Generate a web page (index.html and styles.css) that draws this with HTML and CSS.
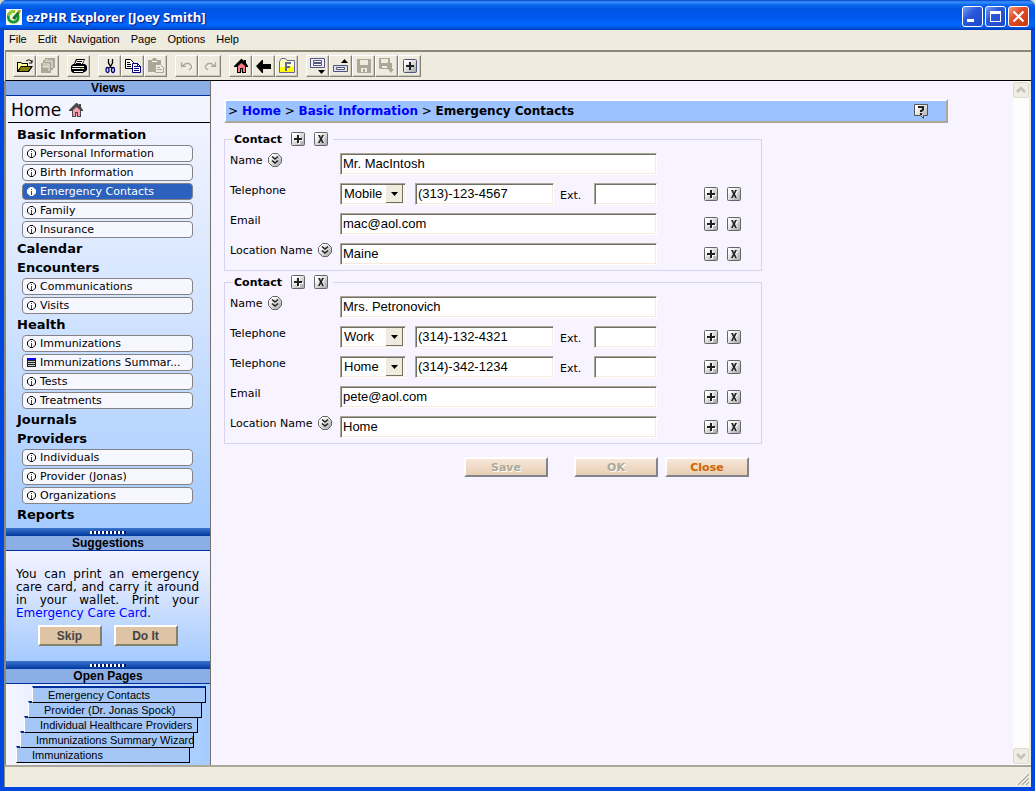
FILE: index.html
```html
<!DOCTYPE html>
<html lang="en">
<head>
    <meta charset="UTF-8">
    <meta name="viewport" content="width=device-width, initial-scale=1.0">
    <title>ezPHR Explorer [Joey Smith]</title>
    <link rel="stylesheet" href="styles.css">
</head>
<body>
<!-- shared icons -->
<svg class="defs" width="0" height="0" aria-hidden="true">
    <defs>
        <linearGradient id="metal" x1="0" y1="0" x2="1" y2="1">
            <stop offset="0.2" stop-color="#fff"/>
            <stop offset="1" stop-color="#a0a0a0"/>
        </linearGradient>
    </defs>
    <symbol id="info" viewBox="0 0 9 9">
        <path d="M3 .5h3l2.5 2.5v3L6 8.5H3L.5 6V3z" fill="#fff" stroke="currentColor"/>
        <path class="dot" d="M4 2h1v1H4zM4 4h1v4H4z"/>
    </symbol>
    <symbol id="form" viewBox="0 0 9 9">
        <path d="M0 0h9v9H0z" fill="#222"/>
        <path d="M0 0h9v2H0z" fill="#00f"/>
        <path d="M1 3h7v1H1zM1 5h7v1H1zM1 7h7v1H1z" fill="#ccc"/>
    </symbol>
    <symbol id="house" viewBox="0 0 14 14">
        <path class="wall" d="M3 7l4-4h1l4 4v6H3z"/>
        <path class="roof" d="M7 0h1l2 2V1h2v3l2 3v1h-2v6H8v-4H7v4H3V8H0V7zM4 7v6h2V9h3v4h2V7L7.500 4z" fill-rule="evenodd"/>
    </symbol>
    <symbol id="plus" viewBox="0 0 14 14">
        <rect x=".5" y=".5" width="13" height="13" rx="1" fill="url(#metal)" stroke="#666"/>
        <path d="M7 4h2v3h3v2H9v3H7V9H4V7h3z" fill="#fff"/>
        <path d="M6 3h2v3h3v2H8v3H6V8H3V6h3z" fill="#222"/>
    </symbol>
    <symbol id="cross" viewBox="0 0 14 14">
        <rect x=".5" y=".5" width="13" height="13" rx="1" fill="url(#metal)" stroke="#666"/>
        <path d="M5 4h2l1 2 1-2h2L9 7.500l2 3.500H9L8 9.500 7 11H5l2-3.500z" fill="#fff"/>
        <path d="M4 3h2l1 2.500L8 3h2L8 7l2 4H8L7 8.500 6 11H4l2-4z" fill="#222"/>
    </symbol>
    <symbol id="expand" viewBox="0 0 14 14">
        <path d="M4.500.5h5l4 4v5l-4 4h-5l-4-4v-5z" fill="url(#metal)" stroke="#666"/>
        <path d="M4 3.500l3 2.500 3-2.500M4 7.500l3 2.500 3-2.500" fill="none" stroke="#222" stroke-width="1.600"/>
    </symbol>
</svg>

<header class="titlebar">
    <svg class="app-icon" viewBox="0 0 16 16" width="16" height="16">
        <path d="M0 0h16v16H0z" fill="#f4f8ea"/>
        <path d="M9 2.500C4.500 2 1.500 5 2.500 9.500c1 4.500 8 5 9.500.5.6-2 .4-3.500-.5-5" fill="none" stroke="#189a30" stroke-width="2.600"/>
        <path d="M9 2.500C6 2 3 4 2.500 7" fill="none" stroke="#8ccc20" stroke-width="2.600"/>
        <path d="M6 9l7-8 2 1-6 9z" fill="#167a1c"/>
        <path d="M12 1l3 1-2 3z" fill="#f0a020"/>
    </svg>
    <h1>ezPHR Explorer [Joey Smith]</h1>
    <div class="window-buttons">
        <button type="button" aria-label="Minimize"><svg viewBox="0 0 19 19"><path d="M4 12h7v3H4z" fill="#fff"/></svg></button>
        <button type="button" aria-label="Maximize"><svg viewBox="0 0 19 19"><path d="M4 4h11v11H4zM5 7v7h9V7z" fill="#fff" fill-rule="evenodd"/></svg></button>
        <button type="button" class="close" aria-label="Close window"><svg viewBox="0 0 19 19"><path d="M4.500 4.500l10 10M14.500 4.500l-10 10" stroke="#fff" stroke-width="2.200"/></svg></button>
    </div>
</header>

<div class="window">
    <nav class="menubar" aria-label="Menu">
        <button type="button">File</button>
        <button type="button">Edit</button>
        <button type="button">Navigation</button>
        <button type="button">Page</button>
        <button type="button">Options</button>
        <button type="button">Help</button>
    </nav>

    <div class="toolbar">
        <div class="group">
            <button type="button" aria-label="Open"><svg viewBox="0 0 18 16">
                <path d="M1 4h4l1 1h6v3h5l-4 6H1z" fill="#000"/>
                <path d="M2 5h3l1 1h5v2H5l-3 4z" fill="#ffff9c"/>
                <path d="M5 9h10l-3 4H3z" fill="#848200"/>
                <path d="M10 3l2-1h2l2 2m0-2v3h-3" fill="none" stroke="#000"/>
            </svg></button>
            <button type="button" aria-label="Close all" disabled><svg viewBox="0 0 18 16">
                <path d="M6 0h10v10h-2v2h-2v3H2V5h2V2h2z" fill="#aca899"/>
                <path d="M6 3h7v7M4 6h6v7M8 1v1M4 8h5v1H4z" fill="none" stroke="#efebde"/>
            </svg></button>
        </div>
        <div class="group">
            <button type="button" aria-label="Print"><svg viewBox="0 0 18 16">
                <path d="M6 1h9l-2 5h2l2 2v4l-2 2h-1l-1 1H3l-2-2V8l2-2h1z" fill="#000"/>
                <path d="M7 2h7l-2 4H5z" fill="#fff"/>
                <path d="M7 3.500h5M6 5.500h5" stroke="#000"/>
                <path d="M3 8h11v1H2zM2 10h12v1H2zM4 13h9v1H4z" fill="#fff"/>
                <path d="M10 10h2v1h-2z" fill="#cc0"/>
            </svg></button>
        </div>
        <div class="group">
            <button type="button" aria-label="Cut"><svg viewBox="0 0 18 16">
                <path d="M7.500 1v4l3 5M11.500 1v4l-3 5" fill="none" stroke="#000" stroke-width="1.300"/>
                <ellipse cx="6.500" cy="12" rx="1.500" ry="2.500" fill="none" stroke="#000084" stroke-width="1.300"/>
                <ellipse cx="12" cy="12" rx="1.500" ry="2.500" fill="none" stroke="#000084" stroke-width="1.300"/>
            </svg></button>
            <button type="button" aria-label="Copy"><svg viewBox="0 0 18 16">
                <path d="M1.500 1.500h5l3 3v6h-8z" fill="#fff" stroke="#000"/>
                <path d="M3 4.500h3M3 6.500h4M3 8.500h4" stroke="#000"/>
                <path d="M8.500 5.500h5l3 3v6h-8z" fill="#fff" stroke="#000084"/>
                <path d="M10 8.500h3M10 10.500h5M10 12.500h5M13.500 5v3.500H17" fill="none" stroke="#000084"/>
            </svg></button>
            <button type="button" aria-label="Paste" disabled><svg viewBox="0 0 18 16">
                <path d="M1 2h4l1-2h3l1 2h4v12H1z" fill="#aca899"/>
                <path d="M5 3h5v1H5z" fill="#fff"/>
                <path d="M8.500 6.500h5l3 3v5h-8z" fill="#efebde" stroke="#aca899"/>
                <path d="M10 9.500h3M10 11.500h5" stroke="#aca899"/>
            </svg></button>
        </div>
        <div class="group">
            <button type="button" aria-label="Undo" disabled><svg viewBox="0 0 18 16">
                <path d="M4 9.500h5M12 12.500l3-2.500V8l-1-2" fill="none" stroke="#fff"/>
                <path d="M3.500 4v4.500H8M4 8l4-2.500h3L13.500 8v2L11 12" fill="none" stroke="#aca899" stroke-width="1.300"/>
            </svg></button>
            <button type="button" aria-label="Redo" disabled><svg viewBox="0 0 18 16">
                <path d="M15 9.500h-5M7 12.500L4.500 10" fill="none" stroke="#fff"/>
                <path d="M14.500 4v4.500H10M14 8l-4-2.500H7L4.500 8v2L7 12" fill="none" stroke="#aca899" stroke-width="1.300"/>
            </svg></button>
        </div>
        <div class="group">
            <button type="button" aria-label="Home"><svg viewBox="-2 -1 18 16"><use href="#house" width="14" height="14"/></svg></button>
            <button type="button" aria-label="Back"><svg viewBox="0 0 18 16"><path d="M1 8l6-6h1v4h8v5H8v4H7z" fill="#000"/></svg></button>
            <button type="button" aria-label="Favorites"><svg viewBox="0 0 18 16">
                <path d="M1.500 3.500l2-3h4l1.500 2h7.500v12h-15z" fill="#ffffc0" stroke="#63659c"/>
                <path d="M2 9h14v5H2z" fill="#ffff00"/>
                <path d="M7 4h6v2H9v2h3v2H9v3H7z" fill="#63659c"/>
            </svg></button>
        </div>
        <div class="group">
            <button type="button" aria-label="Expand section"><svg viewBox="0 0 18 16">
                <path d="M1.500.5h14v9h-14z" fill="#f0f0ff" stroke="#52557b"/>
                <path d="M4.500 2.500h8v2h-8zM4.500 5.500h8v2h-8z" fill="#fff" stroke="#52557b"/>
                <path d="M9 12h7l-3.500 4z" fill="#000"/>
            </svg></button>
            <button type="button" aria-label="Collapse section"><svg viewBox="0 0 18 16">
                <path d="M1.500 7.500h14v6h-14z" fill="#e0e0e8" stroke="#52557b"/>
                <path d="M4.500 9.500h8v2h-8z" fill="#fff" stroke="#52557b"/>
                <path d="M9 5h7l-3.500-4z" fill="#000"/>
            </svg></button>
            <button type="button" aria-label="Save" disabled><svg viewBox="0 0 18 16">
                <path d="M2 1h14v14H3l-1-1zM5 2v5h8V2zM6 10v4h2v-3h2v3h2v-4z" fill="#aca899" fill-rule="evenodd"/>
            </svg></button>
            <button type="button" aria-label="Save and close" disabled><svg viewBox="0 0 18 16">
                <path d="M1 0h11v11H2l-1-1zM3 1v4h7V1zM4 8v2h5V8z" fill="#aca899" fill-rule="evenodd"/>
                <path d="M12 5h2v6h2l-3 4-3-4h2z" fill="#aca899"/>
            </svg></button>
            <button type="button" aria-label="Add"><svg viewBox="0 0 18 16">
                <rect x="2.500" y="1.500" width="13" height="13" rx="1" fill="url(#metal)" stroke="#52557b"/>
                <path d="M8 4h2v3h3v2h-3v3H8V9H5V7h3z" fill="#222"/>
            </svg></button>
        </div>
    </div>

    <div class="workspace">
        <aside class="sidebar">
            <h2 class="panel-title">Views</h2>
            <nav class="views" aria-label="Views">
                <a class="home" href="#">Home <svg class="faded" width="14" height="14"><use href="#house"/></svg></a>
                <h3>Basic Information</h3>
                <a class="view" href="#"><svg><use href="#info"/></svg>Personal Information</a>
                <a class="view" href="#"><svg><use href="#info"/></svg>Birth Information</a>
                <a class="view active" href="#"><svg><use href="#info"/></svg>Emergency Contacts</a>
                <a class="view" href="#"><svg><use href="#info"/></svg>Family</a>
                <a class="view" href="#"><svg><use href="#info"/></svg>Insurance</a>
                <h3>Calendar</h3>
                <h3>Encounters</h3>
                <a class="view" href="#"><svg><use href="#info"/></svg>Communications</a>
                <a class="view" href="#"><svg><use href="#info"/></svg>Visits</a>
                <h3>Health</h3>
                <a class="view" href="#"><svg><use href="#info"/></svg>Immunizations</a>
                <a class="view" href="#"><svg><use href="#form"/></svg>Immunizations Summar...</a>
                <a class="view" href="#"><svg><use href="#info"/></svg>Tests</a>
                <a class="view" href="#"><svg><use href="#info"/></svg>Treatments</a>
                <h3>Journals</h3>
                <h3>Providers</h3>
                <a class="view" href="#"><svg><use href="#info"/></svg>Individuals</a>
                <a class="view" href="#"><svg><use href="#info"/></svg>Provider (Jonas)</a>
                <a class="view" href="#"><svg><use href="#info"/></svg>Organizations</a>
                <h3>Reports</h3>
            </nav>

            <div class="splitter"></div>
            <h2 class="panel-title">Suggestions</h2>
            <section class="suggestions">
                <p>You can print an emergency care card, and carry it around in your wallet. Print your <a href="#">Emergency Care Card</a>.</p>
                <div class="suggestion-buttons">
                    <button type="button">Skip</button>
                    <button type="button">Do It</button>
                </div>
            </section>

            <div class="splitter"></div>
            <h2 class="panel-title">Open Pages</h2>
            <nav class="open-pages" aria-label="Open Pages">
                <a href="#">Emergency Contacts</a>
                <a href="#">Provider (Dr. Jonas Spock)</a>
                <a href="#">Individual Healthcare Providers</a>
                <a href="#">Immunizations Summary Wizard</a>
                <a href="#">Immunizations</a>
            </nav>
        </aside>

        <main class="content">
            <div class="breadcrumbs">
                <span>&gt; <a href="#">Home</a> &gt; <a href="#">Basic Information</a> &gt; <b>Emergency Contacts</b></span>
                <button type="button" class="icon-button" aria-label="Help"><svg viewBox="0 0 14 15">
                    <path d="M.5.500h13v11h-4l0 3-3-3h-6z" fill="url(#metal)" stroke="#555"/>
                    <path d="M4 4V2h6v4L8 8H6V6h1l1-1V4zM6 9h2v2H6z" fill="#222"/>
                </svg></button>
            </div>

            <form class="contacts">
                <fieldset>
                    <legend>Contact
                        <button type="button" class="icon-button" aria-label="Add contact"><svg><use href="#plus"/></svg></button>
                        <button type="button" class="icon-button" aria-label="Remove contact"><svg><use href="#cross"/></svg></button>
                    </legend>
                    <div class="row">
                        <div class="caption"><label for="name1">Name</label><button type="button" class="icon-button" aria-label="Name details"><svg><use href="#expand"/></svg></button></div>
                        <div class="fields"><input type="text" id="name1" value="Mr. MacIntosh"></div>
                    </div>
                    <div class="row">
                        <div class="caption"><label for="phone1">Telephone</label></div>
                        <div class="fields">
                            <select aria-label="Telephone type"><option>Mobile</option><option>Work</option><option>Home</option></select>
                            <input type="text" id="phone1" value="(313)-123-4567">
                            <label class="ext" for="ext1">Ext.</label>
                            <input type="text" class="ext-input" id="ext1">
                        </div>
                        <div class="row-buttons">
                            <button type="button" class="icon-button" aria-label="Add"><svg><use href="#plus"/></svg></button>
                            <button type="button" class="icon-button" aria-label="Remove"><svg><use href="#cross"/></svg></button>
                        </div>
                    </div>
                    <div class="row">
                        <div class="caption"><label for="email1">Email</label></div>
                        <div class="fields"><input type="text" id="email1" value="mac@aol.com"></div>
                        <div class="row-buttons">
                            <button type="button" class="icon-button" aria-label="Add"><svg><use href="#plus"/></svg></button>
                            <button type="button" class="icon-button" aria-label="Remove"><svg><use href="#cross"/></svg></button>
                        </div>
                    </div>
                    <div class="row">
                        <div class="caption"><label for="location1">Location Name</label><button type="button" class="icon-button" aria-label="Location details"><svg><use href="#expand"/></svg></button></div>
                        <div class="fields"><input type="text" id="location1" value="Maine"></div>
                        <div class="row-buttons">
                            <button type="button" class="icon-button" aria-label="Add"><svg><use href="#plus"/></svg></button>
                            <button type="button" class="icon-button" aria-label="Remove"><svg><use href="#cross"/></svg></button>
                        </div>
                    </div>
                </fieldset>

                <fieldset>
                    <legend>Contact
                        <button type="button" class="icon-button" aria-label="Add contact"><svg><use href="#plus"/></svg></button>
                        <button type="button" class="icon-button" aria-label="Remove contact"><svg><use href="#cross"/></svg></button>
                    </legend>
                    <div class="row">
                        <div class="caption"><label for="name2">Name</label><button type="button" class="icon-button" aria-label="Name details"><svg><use href="#expand"/></svg></button></div>
                        <div class="fields"><input type="text" id="name2" value="Mrs. Petronovich"></div>
                    </div>
                    <div class="row">
                        <div class="caption"><label for="phone2">Telephone</label></div>
                        <div class="fields">
                            <select aria-label="Telephone type"><option>Work</option><option>Mobile</option><option>Home</option></select>
                            <input type="text" id="phone2" value="(314)-132-4321">
                            <label class="ext" for="ext2">Ext.</label>
                            <input type="text" class="ext-input" id="ext2">
                        </div>
                        <div class="row-buttons">
                            <button type="button" class="icon-button" aria-label="Add"><svg><use href="#plus"/></svg></button>
                            <button type="button" class="icon-button" aria-label="Remove"><svg><use href="#cross"/></svg></button>
                        </div>
                    </div>
                    <div class="row">
                        <div class="caption"><label for="phone3">Telephone</label></div>
                        <div class="fields">
                            <select aria-label="Telephone type"><option>Home</option><option>Mobile</option><option>Work</option></select>
                            <input type="text" id="phone3" value="(314)-342-1234">
                            <label class="ext" for="ext3">Ext.</label>
                            <input type="text" class="ext-input" id="ext3">
                        </div>
                        <div class="row-buttons">
                            <button type="button" class="icon-button" aria-label="Add"><svg><use href="#plus"/></svg></button>
                            <button type="button" class="icon-button" aria-label="Remove"><svg><use href="#cross"/></svg></button>
                        </div>
                    </div>
                    <div class="row">
                        <div class="caption"><label for="email2">Email</label></div>
                        <div class="fields"><input type="text" id="email2" value="pete@aol.com"></div>
                        <div class="row-buttons">
                            <button type="button" class="icon-button" aria-label="Add"><svg><use href="#plus"/></svg></button>
                            <button type="button" class="icon-button" aria-label="Remove"><svg><use href="#cross"/></svg></button>
                        </div>
                    </div>
                    <div class="row">
                        <div class="caption"><label for="location2">Location Name</label><button type="button" class="icon-button" aria-label="Location details"><svg><use href="#expand"/></svg></button></div>
                        <div class="fields"><input type="text" id="location2" value="Home"></div>
                        <div class="row-buttons">
                            <button type="button" class="icon-button" aria-label="Add"><svg><use href="#plus"/></svg></button>
                            <button type="button" class="icon-button" aria-label="Remove"><svg><use href="#cross"/></svg></button>
                        </div>
                    </div>
                </fieldset>

                <div class="actions">
                    <button type="submit" class="save" disabled>Save</button>
                    <button type="button" disabled>OK</button>
                    <button type="button">Close</button>
                </div>
            </form>
        </main>

        <div class="scrollbar">
            <button type="button" aria-label="Scroll up" disabled><svg viewBox="0 0 14 14"><path d="M3 9l4-4 4 4" fill="none" stroke="#c4c2b8" stroke-width="2.500"/></svg></button>
            <button type="button" aria-label="Scroll down" disabled><svg viewBox="0 0 14 14"><path d="M3 5l4 4 4-4" fill="none" stroke="#c4c2b8" stroke-width="2.500"/></svg></button>
        </div>
    </div>

    <footer class="statusbar">
        <svg viewBox="0 0 12 12" width="12" height="12">
            <path d="M1 12L12 1M5 12l7-7M9 12l3-3" stroke="#fff" stroke-width="3"/>
            <path d="M1 12L12 1M5 12l7-7M9 12l3-3" stroke="#aca899" stroke-width="1.500"/>
        </svg>
    </footer>
</div>
</body>
</html>
```

FILE: styles.css
```css
* {
    box-sizing: border-box;
}
html {
    background: #d8d4c8;
}
body {
    margin: 0;
    min-height: 100vh;
    display: flex;
    flex-direction: column;
    font-family: "DejaVu Sans", Verdana, sans-serif;
    font-size: 11px;
    color: #000;
    background: #0046e0;
    border-radius: 7px 7px 0 0;
    overflow: hidden;
}
button {
    font: inherit;
    color: inherit;
    padding: 0;
    margin: 0;
}
h1, h2, h3, p {
    margin: 0;
}
a {
    color: #00f;
    text-decoration: none;
}
.defs {
    position: absolute;
}

/* title bar */
.titlebar {
    height: 30px;
    display: flex;
    align-items: center;
    gap: 4px;
    padding: 3px 6px 0;
    background: linear-gradient(#0040c8 0, #3a92ff 2px, #0a66ee 5px, #0054e3 9px, #0058ee 18px, #0068ff 25px, #0050d8 28px, #003cb0 30px);
}
.titlebar h1 {
    flex: 1;
    font: bold 13px "Open Sans", sans-serif;
    color: #fff;
    text-shadow: 1px 1px 1px #0a1883;
}
.window-buttons {
    display: flex;
    gap: 2px;
}
.window-buttons button {
    width: 21px;
    height: 21px;
    border: 1px solid #fff;
    border-radius: 3px;
    background: linear-gradient(135deg, #7a9cf0, #2a58dc 40%, #1c48c8);
}
.window-buttons .close {
    background: linear-gradient(135deg, #f0a080, #e04c28 40%, #c83810);
}
.window-buttons svg {
    display: block;
    width: 19px;
    height: 19px;
}

.window {
    flex: 1;
    display: flex;
    flex-direction: column;
    border: solid #0046e0;
    border-width: 0 4px 4px;
    background: #efebde;
}

/* menu and toolbar */
.menubar {
    height: 20px;
    padding-bottom: 2px;
    display: flex;
    align-items: center;
    gap: 1px;
}
.menubar button {
    padding: 0 5px;
    border: none;
    background: none;
    font: 11px "Liberation Sans", Tahoma, sans-serif;
}
.toolbar {
    height: 31px;
    margin-left: 1px;
    padding: 3px 7px 0;
    display: flex;
    align-items: flex-start;
    gap: 8px;
    border-top: 2px solid #8c887a;
    border-left: 1px solid #8c887a;
    border-bottom: 1px solid #000;
}
.group {
    display: flex;
}
.toolbar button {
    width: 23px;
    height: 22px;
    display: grid;
    place-items: center;
    border: 1px solid;
    border-color: #fff #848278 #848278 #fff;
    background: #efebde;
    box-shadow: inset -1px -1px #cdc9bb;
}
.toolbar svg {
    width: 18px;
    height: 16px;
}
.wall {
    fill: #f77a84;
}
.roof {
    fill: #000;
}
.faded {
    opacity: 0.7;
}

.workspace {
    flex: 1;
    display: flex;
    margin-right: 2px;
    background: #f7f3ff;
}

/* left side */
.sidebar {
    width: 207px;
    flex: none;
    display: flex;
    flex-direction: column;
    border-left: 2px solid #8c887a;
    border-right: 1px solid #73716b;
}
.panel-title {
    height: 15px;
    text-align: center;
    font: bold 12px/15px "Liberation Sans", Tahoma, sans-serif;
    background: #8caee7;
    border-bottom: 1px solid #00309c;
}
.views {
    display: flex;
    flex-direction: column;
    padding: 0 17px 4px 16px;
    background: linear-gradient(#f5f5ff, #d6e6ff 45%, #a5cbff);
}
.home {
    display: flex;
    align-items: center;
    gap: 8px;
    height: 27px;
    margin: 0 -17px 2px -14px;
    padding: 2px 0 0 3px;
    font-size: 17px;
    color: #000;
    border-bottom: 1px solid #000;
}
.views h3 {
    margin-left: -5px;
    font-size: 13px;
    line-height: 19px;
}
.view {
    display: flex;
    align-items: center;
    gap: 4px;
    height: 17px;
    margin: 1px 0;
    padding-left: 4px;
    border: 1px solid #848284;
    border-radius: 4px;
    background: #f7f7ff;
    color: #000;
    white-space: nowrap;
}
.view svg {
    width: 9px;
    height: 9px;
    flex: none;
}
.dot {
    fill: #d00000;
}
.view.active {
    background: #2c61bd;
    color: #fff;
}
.view.active svg {
    color: #fff;
}
.view.active .dot {
    fill: #00a0e0;
}
.splitter {
    height: 8px;
    flex: none;
    display: flex;
    justify-content: center;
    align-items: center;
    background: linear-gradient(#3c75cc, #0038a0);
}
.splitter::before {
    content: "";
    width: 36px;
    height: 3px;
    background: repeating-linear-gradient(90deg, #fff 0 2px, #001c60 2px 4px);
}
.suggestions {
    padding: 17px 11px 15px 10px;
    font-size: 12px;
    line-height: 13px;
    background: linear-gradient(#f5f3ff, #a5cbff);
}
.suggestions p {
    text-align: justify;
}
.suggestion-buttons {
    display: flex;
    justify-content: center;
    gap: 12px;
    margin-top: 5px;
}
.suggestion-buttons button {
    width: 64px;
    height: 21px;
    font: bold 12px "Liberation Sans", Tahoma, sans-serif;
    color: #444;
    background: #dec3a5;
    border: 2px solid;
    border-color: #fff #84826b #84826b #fff;
}
.open-pages {
    flex: 1;
    padding: 2px 0 0 10px;
    background: linear-gradient(90deg, #f5f5ff, #a5cbff);
}
.open-pages a {
    display: block;
    position: relative;
    width: 174px;
    height: 17px;
    margin-bottom: -2px;
    padding-left: 15px;
    font: 11px/14px "Liberation Sans", Tahoma, sans-serif;
    white-space: nowrap;
    color: #000;
    background: #a5c7f7;
    border-top: 2px solid #00309c;
    border-left: 1px solid #fff;
    border-right: 1px solid #000;
    border-bottom: 1px solid #000;
}
.open-pages a:nth-child(1) { margin-left: 16px; z-index: 5; }
.open-pages a:nth-child(2) { margin-left: 12px; z-index: 4; }
.open-pages a:nth-child(3) { margin-left: 8px; z-index: 3; }
.open-pages a:nth-child(4) { margin-left: 4px; z-index: 2; }
.open-pages a:nth-child(5) { z-index: 1; }

/* page */
.content {
    flex: 1;
    padding: 18px 13px;
}
.breadcrumbs {
    max-width: 724px;
    height: 24px;
    display: flex;
    align-items: center;
    justify-content: space-between;
    padding: 0 18px 0 2px;
    font-size: 12px;
    background: #9cc3ff;
    border: 2px solid;
    border-color: #fff #aca899 #aca899 #fff;
}
.breadcrumbs a {
    font-weight: bold;
}
.contacts {
    max-width: 538px;
    margin-top: 8px;
}
fieldset {
    min-width: 0;
    margin: 0 0 3px;
    padding: 5px;
    border: 1px solid #d6d3ef;
}
legend {
    height: 16px;
    display: flex;
    align-items: center;
    gap: 9px;
    margin-left: 3px;
    padding: 0 5px 0 1px;
    font-weight: bold;
}
.icon-button {
    border: none;
    background: none;
    display: block;
    cursor: pointer;
}
.icon-button svg {
    display: block;
    width: 14px;
    height: 14px;
}
.breadcrumbs .icon-button svg {
    height: 15px;
}
.row {
    display: grid;
    grid-template-columns: 110px minmax(0, 1fr) 52px;
    margin-bottom: 7px;
}
.row:last-child {
    margin-bottom: 0;
}
.caption {
    display: flex;
    gap: 6px;
    height: 16px;
    align-items: center;
    white-space: nowrap;
}
.fields {
    display: flex;
    align-items: center;
    margin-right: 47px;
}
.fields input, .fields select {
    height: 22px;
    min-width: 0;
    flex: 1;
    padding: 0 2px;
    border: 1px solid;
    border-color: #aca899 #fff #fff #aca899;
    border-radius: 0;
    box-shadow: inset 1px 1px #716f64, inset -1px -1px #f7ebe0;
    background: #fff;
    color: #000;
    font: 13px "Liberation Sans", Arial, sans-serif;
}
.fields select {
    flex: none;
    width: 66px;
    margin-right: 9px;
    padding: 0 3px;
    appearance: none;
    background: #fff url("data:image/svg+xml,%3Csvg xmlns='http://www.w3.org/2000/svg' width='18' height='19'%3E%3Cpath d='M0 0h17v18H0z' fill='%23716f64'/%3E%3Cpath d='M0 0h16v17H0z' fill='%23efebde'/%3E%3Cpath d='M5 7h7l-3.5 4z'/%3E%3C/svg%3E") right 1px top 1px no-repeat;
}
.ext {
    margin: 4px 0 0 6px;
    width: 34px;
}
.fields .ext-input {
    flex: none;
    width: 63px;
}
.row-buttons {
    display: flex;
    align-items: center;
    gap: 9px;
}
.row {
    min-height: 23px;
}
.actions {
    display: flex;
    justify-content: flex-end;
    gap: 7px;
    margin-top: 13px;
    padding-right: 13px;
}
.actions button {
    width: 84px;
    height: 20px;
    font-weight: bold;
    color: #ce6500;
    background: linear-gradient(#f7e7d8, #e7cfb5);
    border: 2px solid;
    border-color: #fff #84828c #84828c #fff;
}
.actions button:disabled {
    color: #aca899;
    text-shadow: 1px 1px #fff;
}
.actions .save {
    margin-right: 19px;
}

.scrollbar {
    width: 16px;
    display: flex;
    flex-direction: column;
    justify-content: space-between;
    padding: 1px 0;
    background: #fdfdfb;
}
.scrollbar button {
    width: 16px;
    height: 16px;
    display: grid;
    place-items: center;
    border: 1px solid #dedace;
    border-radius: 2px;
    background: #f0eee4;
}
.scrollbar svg {
    width: 14px;
    height: 14px;
}
.statusbar {
    height: 22px;
    display: flex;
    justify-content: flex-end;
    align-items: flex-end;
    padding: 0 2px 2px 0;
    border-top: 2px solid #aca899;
    border-left: 1px solid #8c887a;
}
```
